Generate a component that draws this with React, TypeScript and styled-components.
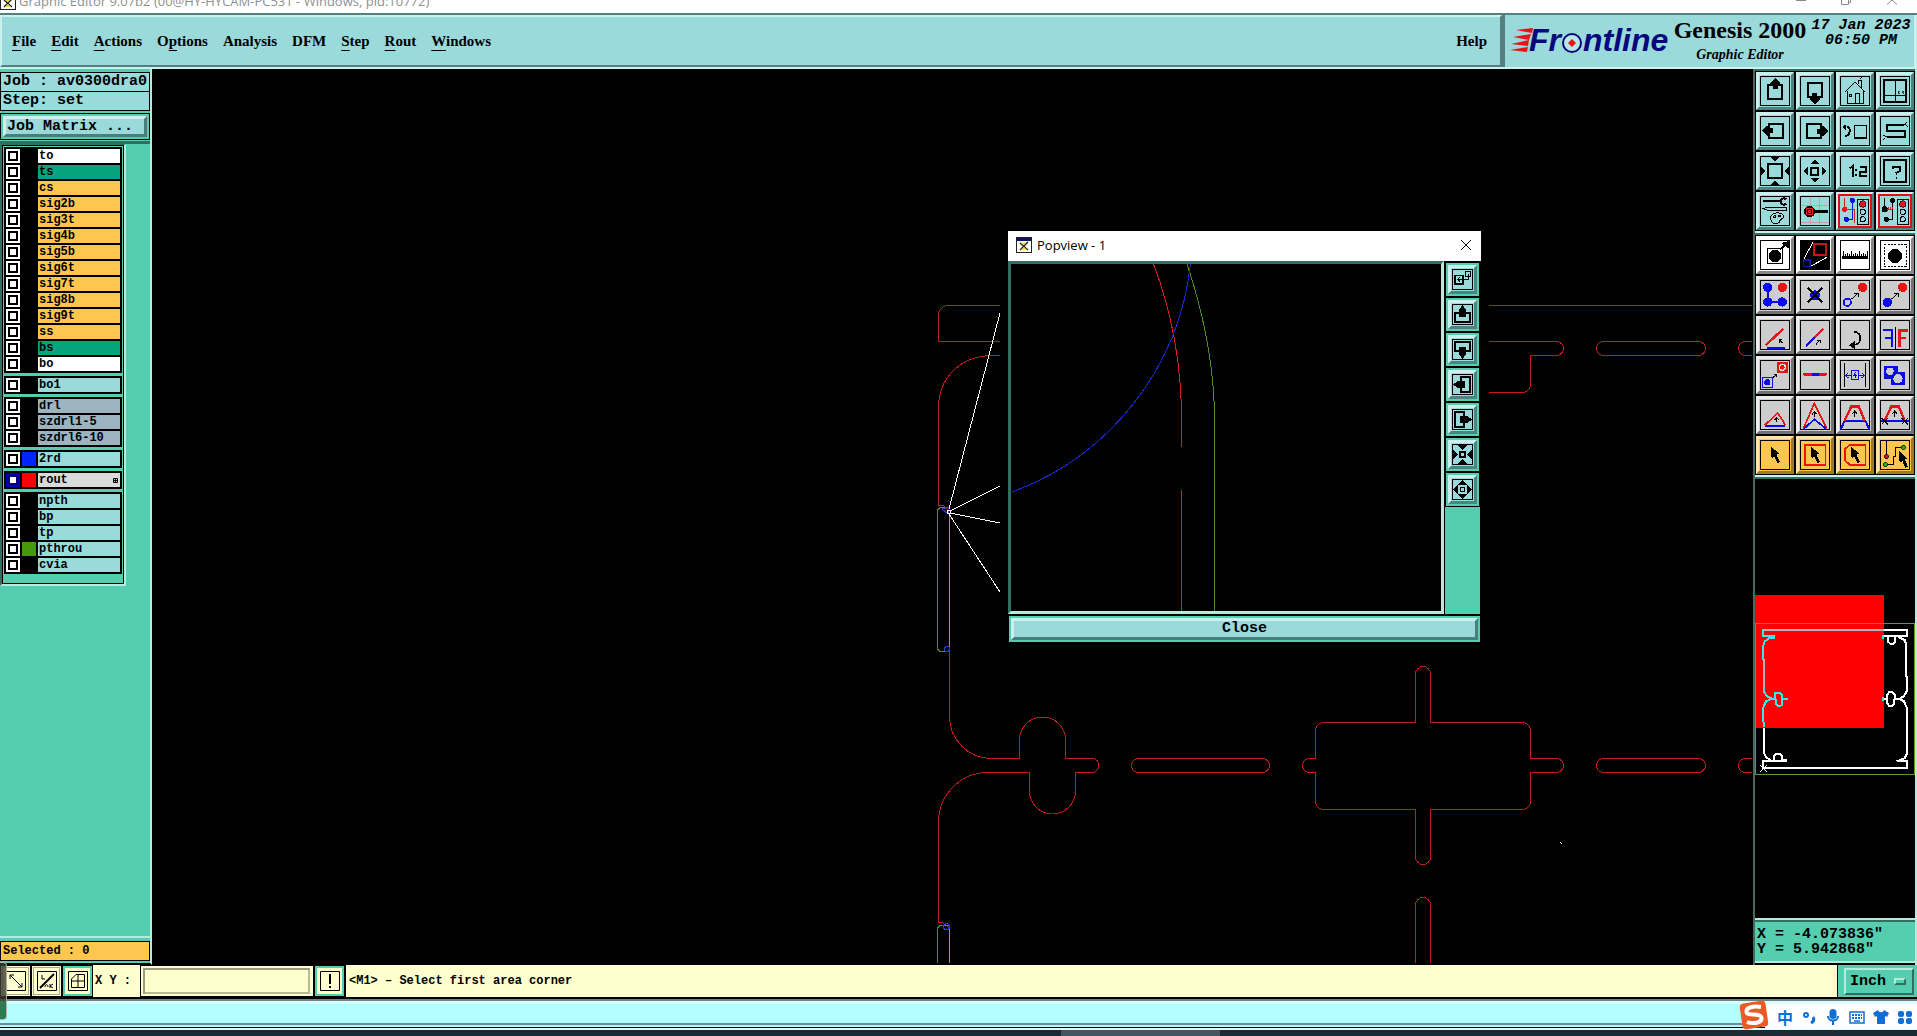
import React from "react";
import styled, { createGlobalStyle, css } from "styled-components";

const MONO = '"Liberation Mono", "Courier New", monospace';
const SERIF = '"Liberation Serif", "Times New Roman", serif';
const UI = '"Open Sans", "Noto Sans", sans-serif';

const c = {
  aqua: "#9adada",
  aquaLight: "#c9f2ee",
  aquaDark: "#56807f",
  green: "#55ceb0",
  greenLight: "#b5ebdc",
  greenDark: "#336f60",
  orange: "#fec64f",
  cream: "#ffffce",
  red: "#c41c1c",
};

const Global = createGlobalStyle`
  * { box-sizing: border-box; }
  html, body, #root { height: 100%; }
  body { margin: 0; background: #000; overflow: hidden; }
  button, input, select { margin: 0; padding: 0; border-radius: 0; }
`;

const Page = styled.div`
  position: relative;
  display: flex;
  flex-direction: column;
  height: 100vh;
  font-family: ${MONO};
  font-weight: bold;
  color: #000;
`;

/* ---------- window title ---------- */

const TitleBar = styled.header`
  display: flex;
  align-items: flex-end;
  justify-content: space-between;
  flex: none;
  height: 13px;
  overflow: hidden;
  background: #fff;
`;

const TitleText = styled.div`
  display: flex;
  align-items: flex-end;
  gap: 3px;
  font: 13px/18px ${UI};
  color: #8f8f8f;
  white-space: nowrap;
  padding-bottom: 3px;
`;

const WindowControls = styled.svg`
  width: 130px;
  height: 13px;
`;

/* ---------- menu + brand ---------- */

const bevel = css`
  border: 2px solid;
  border-color: ${c.aquaLight} ${c.aquaDark} ${c.aquaDark} ${c.aquaLight};
`;

const Header = styled.div`
  display: flex;
  flex: none;
  height: 56px;
  border-top: 2px solid ${c.aquaDark};
  border-bottom: 2px solid ${c.aquaLight};
  background: ${c.aqua};
`;

const MenuBar = styled.nav`
  ${bevel}
  display: flex;
  flex: 1;
  align-items: center;
  gap: 15px;
  padding: 0 13px 0 10px;
`;

const MenuItem = styled.button<{ $end?: boolean }>`
  border: 0;
  background: none;
  font: bold 15px/20px ${SERIF};
  margin-left: ${(p) => (p.$end ? "auto" : "0")};
  u {
    text-underline-offset: 4px;
    text-decoration-thickness: 1px;
    text-decoration-skip-ink: none;
  }
`;

const Brand = styled.div`
  display: flex;
  flex: none;
  width: 415px;
  padding-left: 4px;
  border-left: 3px solid ${c.aquaDark};
  border-right: 3px solid ${c.aquaLight};
`;

const Logo = styled.svg`
  flex: none;
  width: 163px;
  height: 52px;
`;

const Product = styled.div`
  flex: none;
  width: 136px;
  text-align: center;
  white-space: nowrap;
`;

const ProductName = styled.div`
  font: bold 24px/30px ${SERIF};
`;

const ProductPart = styled.div`
  font: italic bold 14px/20px ${SERIF};
`;

const Clock = styled.time`
  flex: 1;
  padding-top: 3px;
  font: italic bold 15px/15px ${MONO};
  text-align: center;
  white-space: nowrap;
`;

/* ---------- workspace ---------- */

const Workspace = styled.main`
  display: flex;
  flex: 1;
  min-height: 0;
`;

const LeftColumn = styled.aside`
  display: flex;
  flex-direction: column;
  flex: none;
  width: 152px;
  padding: 3px 0 2px;
  border-right: 2px solid ${c.greenLight};
  border-bottom: 2px solid #000;
  background: ${c.green};
`;

const InfoBox = styled.div<{ $tone?: string }>`
  flex: none;
  height: 20px;
  margin-bottom: -1px;
  padding: 0 2px;
  border: 1px solid #000;
  background: ${(p) => p.$tone || c.aqua};
  font-size: 15px;
  line-height: 18px;
  white-space: nowrap;
`;

const SelectedBox = styled(InfoBox)`
  margin: 0;
  font-size: 12px;
`;

const MatrixFrame = styled.div`
  flex: none;
  margin: 3px 0 1px;
  padding: 2px;
  border: 1px solid #000;
`;

const BevelButton = styled.button`
  display: block;
  width: 100%;
  height: 22px;
  border: 3px solid;
  border-color: ${c.aquaLight} #46807e #46807e ${c.aquaLight};
  background: ${c.aqua};
  font: bold 15px/16px ${MONO};
`;

const MatrixButton = styled(BevelButton)`
  height: 21px;
  line-height: 15px;
  text-align: left;
  padding-left: 1px;
`;

const LayerWell = styled.div`
  flex: 1;
  min-height: 0;
  border-top: 3px solid ${c.greenDark};
  border-bottom: 2px solid ${c.greenLight};
  margin-bottom: 3px;
`;

const LayerPanel = styled.section`
  width: 126px;
  border: 2px solid;
  border-top-width: 1px;
  border-color: ${c.greenDark} ${c.greenLight} ${c.greenLight} ${c.greenDark};
`;

const LayerList = styled.div`
  display: flex;
  flex-direction: column;
  gap: 3px;
  padding: 1px 1px 9px;
  border: 1px solid #000;
`;

const LayerGroup = styled.div`
  display: flex;
  flex-direction: column;
  gap: 2px;
  padding: 2px;
  background: #000;
`;

const LayerRow = styled.label`
  display: grid;
  grid-template-columns: 14px 14px 1fr;
  gap: 2px;
  height: 14px;
`;

const LayerCheck = styled.input<{ $active?: boolean }>`
  appearance: none;
  width: 14px;
  height: 14px;
  border: 2px solid ${(p) => (p.$active ? "#0000b4" : "#fff")};
  background: #fff;
  box-shadow: inset 0 0 0 2px ${(p) => (p.$active ? "#000070" : "#000")};
`;

const Swatch = styled.span<{ $color?: string }>`
  background: ${(p) => p.$color || "#000"};
`;

const LayerName = styled.span<{ $color: string }>`
  display: flex;
  justify-content: space-between;
  align-items: center;
  padding: 0 2px 0 1px;
  background: ${(p) => p.$color};
  font-size: 12px;
  line-height: 14px;
`;

const CanvasArea = styled.section`
  position: relative;
  flex: 1;
  min-width: 0;
  background: #000;
`;

const Drawing = styled.svg`
  display: block;
  width: 100%;
  height: 100%;
  shape-rendering: crispEdges;
`;

const RightColumn = styled.aside`
  display: flex;
  flex-direction: column;
  flex: none;
  width: 164px;
  padding-bottom: 2px;
  border-left: 2px solid #47695f;
  border-right: 2px solid ${c.greenLight};
  background: #000;
`;

const ToolGrid = styled.div`
  display: grid;
  grid-template-columns: repeat(4, 38px);
  gap: 2px;
  flex: none;
  padding: 1px;
  border-top: 2px solid ${c.greenDark};
  border-bottom: 2px solid ${c.aquaLight};
`;

const tones = {
  teal: ["#9adada", "#c9f2ee", "#4b8583"],
  white: ["#ffffff", "#ffffff", "#888888"],
  grey: ["#cdcdcd", "#eeeeee", "#727272"],
  orange: ["#fec64f", "#ffe6a8", "#a07828"],
} as const;

type Tone = keyof typeof tones;

const ToolButton = styled.button<{ $tone: Tone }>`
  display: block;
  width: 38px;
  height: 38px;
  padding: 1px;
  border: 3px solid;
  border-color: ${(p) => {
    const [, l, d] = tones[p.$tone];
    return `${l} ${d} ${d} ${l}`;
  }};
  background: ${(p) => tones[p.$tone][0]};
  svg {
    display: block;
    width: 30px;
    height: 30px;
    overflow: visible;
    shape-rendering: crispEdges;
  }
`;

const Overview = styled.div`
  flex: 1;
  min-height: 0;
  border-top: 2px solid ${c.greenDark};
  border-bottom: 2px solid ${c.greenLight};
`;

const Coordinates = styled.output`
  display: block;
  flex: none;
  height: 43px;
  padding: 5px 2px;
  border-top: 2px solid ${c.greenDark};
  border-bottom: 2px solid ${c.greenLight};
  background: ${c.green};
  font-size: 15px;
  line-height: 15px;
  white-space: pre;
`;

/* ---------- popview window ---------- */

const Popview = styled.section`
  position: absolute;
  left: 848px;
  top: 153px;
  width: 489px;
  height: 430px;
  padding: 9px 8px 8px;
  background: #000;
`;

const PopTitle = styled.div`
  display: flex;
  align-items: center;
  gap: 5px;
  height: 30px;
  padding: 0 9px 2px 8px;
  background: #fff;
  font: 13px/18px ${UI};
`;

const CloseGlyph = styled.button`
  display: block;
  margin-left: auto;
  width: 12px;
  height: 12px;
  border: 0;
  background: none;
  svg {
    display: block;
  }
`;

const PopBody = styled.div`
  display: flex;
  gap: 1px;
  height: 353px;
  padding-right: 1px;
`;

const PopCanvas = styled.div`
  flex: 1;
  border: 3px solid;
  border-color: ${c.greenDark} ${c.greenLight} ${c.greenLight} ${c.greenDark};
`;

const PopTools = styled.div`
  display: flex;
  flex-direction: column;
  flex: none;
  width: 35px;
  border-top: 1px solid #000;
  background: ${c.green};
`;

const PopToolCell = styled.div`
  flex: none;
  height: 35px;
  padding: 2px;
  border: 1px solid #000;
`;

const PopTool = styled.button`
  display: block;
  width: 29px;
  height: 29px;
  padding: 1px;
  border: 3px solid;
  border-color: ${c.aquaLight} #4b8583 #4b8583 ${c.aquaLight};
  background: ${c.aqua};
  svg {
    display: block;
    width: 21px;
    height: 21px;
    shape-rendering: crispEdges;
  }
`;

const PopFooter = styled.div`
  margin: 2px 1px 0;
  padding: 2px;
  background: ${c.green};
`;

/* ---------- bottom bars ---------- */

const CommandBar = styled.div`
  display: flex;
  flex: none;
  height: 34px;
  border-bottom: 2px solid #000;
  background: ${c.cream};
`;

const SnapButton = styled.button<{ $on?: boolean }>`
  flex: none;
  width: 31px;
  height: 32px;
  padding: 1px;
  border: ${(p) => (p.$on ? `3px solid ${c.green}` : `3px double #a8a890`)};
  outline: 1px solid #000;
  outline-offset: -1px;
  background: ${c.cream};
  svg {
    display: block;
    width: 20px;
    height: 20px;
    margin: 0 auto;
  }
`;

const PointLabel = styled.label`
  flex: none;
  width: 47px;
  padding-left: 2px;
  font-size: 12px;
  line-height: 33px;
  white-space: nowrap;
`;

const PointInput = styled.input`
  flex: none;
  width: 174px;
  height: 32px;
  border: 1px solid #000;
  padding: 0 6px;
  background: ${c.cream};
  box-shadow: inset 2px 2px 0 ${c.cream}, inset -3px -2px 0 ${c.cream},
    inset 4px 4px 0 #9a9a7c, inset -5px -4px 0 #b9b996;
  font: bold 12px ${MONO};
`;

const Message = styled.p`
  flex: 1;
  margin: 0;
  padding-left: 3px;
  border-left: 1px solid #000;
  font-size: 12px;
  line-height: 33px;
`;

const UnitBox = styled.div`
  position: relative;
  flex: none;
  width: 80px;
  padding: 3px 4px 2px 6px;
  border-left: 1px solid #000;
  background: ${c.green};
`;

const UnitSelect = styled.select`
  appearance: none;
  width: 70px;
  height: 27px;
  padding-left: 4px;
  border: 2px solid;
  border-color: ${c.greenLight} ${c.greenDark} ${c.greenDark} ${c.greenLight};
  background: ${c.green};
  color: #000;
  font: bold 15px ${MONO};
`;

const UnitMark = styled.span`
  position: absolute;
  right: 11px;
  top: 13px;
  width: 12px;
  height: 7px;
  border: 2px solid;
  border-color: ${c.greenLight} ${c.greenDark} ${c.greenDark} ${c.greenLight};
  pointer-events: none;
`;

const StatusStrip = styled.div`
  flex: none;
  height: 31px;
  border-top: 2px solid #6f8585;
  border-bottom: 2px solid #d8ffff;
  background: linear-gradient(#d9ffff 0 3px, #b3ffff 3px 22px, #5f9494 22px 24px, #b3ffff 24px 26px, #000 26px);
`;

const Taskbar = styled.footer`
  flex: none;
  height: 6px;
  background: linear-gradient(#45575c, #45575c) 1061px 0 / 159px 6px no-repeat, #1c2b33;
`;

const SideHandle = styled.div`
  position: absolute;
  left: 0;
  bottom: 16px;
  width: 7px;
  height: 58px;
  border: 1px solid rgba(200, 200, 190, 0.8);
  border-left: 0;
  border-radius: 0 4px 4px 0;
  background: linear-gradient(rgba(60, 60, 50, 0.8) 0 38px, #2f7a50 38px);
`;

const ImeBar = styled.div`
  position: absolute;
  right: 0;
  bottom: 7px;
  display: flex;
  align-items: center;
  gap: 8px;
  height: 25px;
  padding: 0 4px 0 12px;
  background: #fff;
  color: #0f6fd6;
  font: bold 16px/20px "Noto Sans CJK SC", sans-serif;
  svg {
    display: block;
  }
`;

const ImeLogo = styled.svg`
  position: absolute;
  left: -27px;
  top: -5px;
`;

/* ---------- icons ---------- */

const Glyph = ({ children, red }: { children: React.ReactNode; red?: boolean }) => (
  <svg viewBox="0 0 90 90" fill="none" stroke="#000" strokeWidth={3}>
    {red ? (
      <rect x={-3} y={-3} width={96} height={96} stroke="#e01010" strokeWidth={6} />
    ) : (
      <rect x={1.5} y={1.5} width={87} height={87} />
    )}
    {children}
  </svg>
);

const PanIcon = ({ turn }: { turn: number }) => (
  <Glyph>
    <g transform={`rotate(${turn} 45 45)`}>
      <rect x={24} y={28} width={43} height={41} strokeWidth={6} />
      <path d="M45 6 L61 21 V25 H53 V40 H38 V25 H30 V21 Z" fill="#000" stroke="none" />
    </g>
  </Glyph>
);

const Arrows = ({ tip, base, half, mid }: { tip: number; base: number; half: number; mid: number }) => (
  <g fill="#000" stroke="none">
    {[0, 90, 180, 270].map((a) => (
      <path key={a} transform={`rotate(${a} ${mid} ${mid})`} d={`M${mid} ${tip} L${mid + half} ${base} H${mid - half} Z`} />
    ))}
  </g>
);

const Cursor = ({ x = 0, y = 0 }: { x?: number; y?: number }) => (
  <path
    transform={`translate(${x} ${y})`}
    d="M32 18 L58 42 L50 44 L60 66 L52 70 L43 49 L35 55 Z"
    fill="#000"
    stroke="none"
  />
);

const Lights = () => (
  <>
    <rect x={52} y={9} width={34} height={76} />
    <circle cx={68} cy={24} r={10} fill="#e01818" strokeWidth={2} />
    <circle cx={68} cy={48} r={8} />
    <circle cx={68} cy={70} r={8} />
  </>
);

const NavIcons: [string, React.ReactNode][] = [
  ["Pan up", <PanIcon turn={0} />],
  ["Pan down", <PanIcon turn={180} />],
  ["Home", <Glyph>
    <path d="M16 48 L45 18 L74 48 M21 45 V81 H69 V45 M54 24 V12 H63 V36 M59 10 L66 3" />
    <path d="M45 81 V53 H58 V81" /><rect x={28} y={55} width={7} height={7} />
  </Glyph>],
  ["Window XY", <Glyph>
    <rect x={12} y={12} width={66} height={65} strokeWidth={5} /><path d="M46 12 V77 M12 58 H78" />
    <path d="M53 45 L60 54 M60 45 L53 54 M65 45 L69 50 L73 45 M69 50 V54" strokeWidth={2} />
  </Glyph>],
  ["Pan left", <PanIcon turn={-90} />],
  ["Pan right", <PanIcon turn={90} />],
  ["Previous view", <Glyph>
    <rect x={43} y={28} width={36} height={37} strokeWidth={5} />
    <path d="M20 32 C34 32 32 60 15 60" strokeWidth={6} /><path d="M6 33 L19 24 V43 Z" fill="#000" stroke="none" />
  </Glyph>],
  ["Serpentine", <Glyph>
    <path d="M72 26 H21 V45 H75 V63 H20" strokeWidth={5} /><path d="M72 26 L82 17 M76 24 L82 32 M20 63 L9 57 M14 66 L9 73" />
  </Glyph>],
  ["Zoom in", <Glyph><rect x={24} y={24} width={43} height={43} strokeWidth={6} /><Arrows tip={17} base={3} half={14} mid={45} /></Glyph>],
  ["Zoom out", <Glyph><rect x={34} y={35} width={21} height={21} strokeWidth={6} /><Arrows tip={11} base={25} half={15} mid={45} /></Glyph>],
  ["Scale 1:2", <Glyph>
    <path d="M30 37 L38 31 V63 M48 39 V44 M48 54 V59 M59 33 H79 V47 H60 V60 H80" strokeWidth={6} />
  </Glyph>],
  ["Query", <Glyph>
    <rect x={12} y={12} width={66} height={66} strokeWidth={5} /><path d="M38 40 V32 H60 V45 L49 51 V58 M49 63 V68" strokeWidth={5} />
  </Glyph>],
  ["Options", <Glyph>
    <path d="M9 16 H60" strokeWidth={6} /><path d="M78 10 A9 9 0 1 0 78 23" strokeWidth={6} />
    <path d="M10 38 L20 34 H78 V42 H20 Z" />
    <path d="M35 76 C25 62 38 50 52 51 C72 50 76 64 66 68 C54 72 64 80 52 82 C43 83 37 82 35 76 Z" />
    <circle cx={44} cy={62} r={3} /><circle cx={58} cy={60} r={3} />
  </Glyph>],
  ["Grid origin", <Glyph>
    <path d="M30 3 V87 M58 3 V87 M3 27 H87 M3 78 H87" stroke="#c9a3a3" />
    <circle cx={29} cy={47} r={17} fill="#000" stroke="none" /><path d="M44 47 H84" strokeWidth={9} />
    <rect x={20} y={38} width={18} height={18} stroke="#d02020" /><rect x={26} y={44} width={5} height={5} stroke="#d02020" />
  </Glyph>],
  ["Net analyzer", <Glyph red>
    <path d="M14 6 V40 M14 40 H43 V82" stroke="#d02020" /><circle cx={14} cy={40} r={8} fill="#e01818" stroke="none" />
    <path d="M37 13 V70 H19" stroke="#1010e0" strokeWidth={4} /><circle cx={37} cy={13} r={8} fill="#1010e0" stroke="none" /><circle cx={19} cy={70} r={8} fill="#1010e0" stroke="none" />
    <Lights />
  </Glyph>],
  ["Measure analyzer", <Glyph red>
    <path d="M14 6 V40 M37 13 V70 H19" /><circle cx={14} cy={40} r={8} fill="#000" /><circle cx={37} cy={13} r={6} fill="#000" /><circle cx={19} cy={70} r={6} fill="#000" />
    <path d="M22 40 H37 M24 33 V40 M30 33 V40 M36 33 V40" stroke="#d02020" />
    <Lights />
  </Glyph>],
];

const R = "#e81414";
const B = "#0a0af0";

const EditIcons: [string, Tone, React.ReactNode][] = [
  ["Add feature", "white", <Glyph>
    <rect x={22} y={26} width={46} height={44} /><circle cx={45} cy={48} r={17} fill="#000" /><path d="M60 28 L76 16" strokeWidth={6} /><path d="M84 5 V22 L67 10 Z" fill="#000" />
  </Glyph>],
  ["Zoom selection", "white", <Glyph>
    <rect x={0} y={0} width={90} height={90} fill="#000" stroke="none" />
    <rect x={42} y={11} width={35} height={35} stroke="#c01818" strokeWidth={5} /><rect x={11} y={60} width={19} height={19} stroke="#1414d0" strokeWidth={5} />
    <path d="M12 56 L39 7 M34 78 L80 52" stroke="#fff" />
  </Glyph>],
  ["Ruler", "white", <Glyph>
    <path d="M8 56 H82 V50 H8 Z" fill="#000" /><path d="M9 34 V55 M15 43 V55 M21 38 V55 M27 43 V55 M33 34 V55 M39 43 V55 M45 38 V55 M51 43 V55 M57 34 V55 M63 43 V55 M69 38 V55 M75 43 V55 M81 34 V55" />
  </Glyph>],
  ["Select feature", "white", <Glyph>
    <rect x={13} y={14} width={65} height={66} strokeDasharray="6 4" /><circle cx={45} cy={48} r={20} fill="#000" />
  </Glyph>],
  ["Net polygon", "grey", <Glyph>
    <path d="M23 22 V66 H67" stroke={B} strokeWidth={7} /><g stroke="none" fill={B}><circle cx={23} cy={22} r={14} /><circle cx={23} cy={66} r={14} /><circle cx={67} cy={66} r={14} /></g><circle cx={67} cy={22} r={14} fill={R} stroke="none" />
  </Glyph>],
  ["Delete", "grey", <Glyph><circle cx={45} cy={46} r={15} fill={B} stroke="none" /><path d="M23 24 L67 68 M67 24 L23 68" strokeWidth={6} /></Glyph>],
  ["Copy feature", "grey", <Glyph>
    <circle cx={22} cy={67} r={11} stroke={B} strokeWidth={5} /><circle cx={68} cy={22} r={14} fill={R} stroke="none" /><path d="M35 57 L53 41 M42 40 H54 V52" />
  </Glyph>],
  ["Move feature", "grey", <Glyph>
    <circle cx={22} cy={67} r={14} fill={B} stroke="none" /><circle cx={68} cy={22} r={14} fill={R} stroke="none" /><path d="M35 57 L53 41 M42 40 H54 V52" />
  </Glyph>],
  ["Rotate line", "grey", <Glyph>
    <path d="M17 76 L70 26" stroke={R} strokeWidth={7} /><path d="M20 83 H76" stroke={B} strokeWidth={7} /><path d="M68 70 L57 59 M57 68 V59 H67" />
  </Glyph>],
  ["Extend line", "grey", <Glyph>
    <path d="M18 78 L45 52" stroke={B} strokeWidth={7} /><path d="M45 52 L69 26" stroke={R} strokeWidth={7} /><path d="M48 73 L60 60 M50 60 H60 V70" />
  </Glyph>],
  ["Rotate", "grey", <Glyph><path d="M42 35 C68 35 68 76 38 75" strokeWidth={5} /><path d="M29 76 L42 66 V84 Z" fill="#000" /></Glyph>],
  ["Mirror", "grey", <Glyph>
    <path d="M8 31 H35 V82 M35 54 H14" stroke={B} strokeWidth={6} /><path d="M46 22 V86" /><path d="M84 31 H58 V82 M58 54 H78" stroke={R} strokeWidth={7} />
  </Glyph>],
  ["Scale", "grey", <Glyph>
    <rect x={7} y={52} width={30} height={30} stroke={B} /><circle cx={22} cy={67} r={9} fill={B} stroke="none" /><rect x={54} y={8} width={27} height={27} fill={R} stroke={R} strokeWidth={6} /><circle cx={67} cy={22} r={9} fill={R} stroke="#ddd" strokeWidth={4} /><path d="M40 52 L50 43 M42 43 H50 V51" />
  </Glyph>],
  ["Join", "grey", <Glyph><path d="M13 43 H77" stroke={R} strokeWidth={8} strokeLinecap="round" /><path d="M36 43 H56" stroke={B} strokeWidth={8} /></Glyph>],
  ["Spacing", "grey", <Glyph>
    <path d="M13 10 V80 M77 10 V80" /><g stroke={B}><rect x={34} y={32} width={22} height={26} /><path d="M34 46 H17 M25 38 L16 46 L25 54 M56 46 H73 M65 38 L74 46 L65 54 M47 37 L41 46 H50 M47 41 V53" /></g>
  </Glyph>],
  ["Substitute", "grey", <Glyph>
    <path d="M12 18 H54 V37 H76 V76 H34 V57 H12 Z" fill={B} stroke="none" /><circle cx={30} cy={34} r={11} fill="#ccc" stroke="none" /><circle cx={54} cy={56} r={14} fill="#ccc" stroke="none" />
  </Glyph>],
  ["Chamfer", "grey", <Glyph><path d="M15 78 H76" stroke={B} strokeWidth={7} /><path d="M14 76 L53 39 L77 76" stroke={R} strokeWidth={5} /><path d="M50 66 V54 M43 60 L50 53 L57 60" /></Glyph>],
  ["Peak", "grey", <Glyph><path d="M10 86 L43 10 L80 86" stroke={R} strokeWidth={5} /><path d="M12 86 L43 58 L78 86" stroke={B} strokeWidth={5} /><path d="M43 50 V36 M36 43 L43 35 L50 43" /></Glyph>],
  ["Trapezoid", "grey", <Glyph><path d="M2 88 L14 62 H76 L88 88" stroke={B} strokeWidth={6} /><path d="M14 62 L34 19 H56 L74 62" stroke={R} strokeWidth={7} /><path d="M44 52 V34 M37 41 L44 33 L51 41" /></Glyph>],
  ["Trim trapezoid", "grey", <Glyph><path d="M2 62 H88" stroke={B} strokeWidth={7} /><path d="M14 62 L34 19 H56 L74 62" stroke={R} strokeWidth={7} /><path d="M44 52 V34 M37 41 L44 33 L51 41 M5 54 L24 73 M24 54 L5 73 M65 54 L84 73 M84 54 L65 73" /></Glyph>],
  ["Select", "orange", <Glyph><Cursor /></Glyph>],
  ["Select in frame", "orange", <Glyph><rect x={14} y={14} width={62} height={61} stroke={R} strokeWidth={5} /><Cursor /></Glyph>],
  ["Select in polygon", "orange", <Glyph><path d="M30 14 H76 V75 H30 L14 60 V28 Z" stroke={R} strokeWidth={5} /><Cursor /></Glyph>],
  ["Select net", "orange", <Glyph>
    <path d="M19 3 V48 M16 74 H39 V48 H47 V22 H68" /><circle cx={19} cy={50} r={7} fill="#c01818" strokeWidth={2} /><circle cx={16} cy={74} r={7} fill="#20b020" strokeWidth={2} /><circle cx={70} cy={22} r={7} fill="#20b020" strokeWidth={2} /><Cursor x={24} y={14} />
  </Glyph>],
];

const SmallGlyph = ({ children }: { children: React.ReactNode }) => (
  <svg viewBox="0 0 63 63" fill="none" stroke="#000" strokeWidth={3}>
    <rect x={1.5} y={1.5} width={60} height={60} />
    {children}
  </svg>
);

const SmallPan = ({ turn }: { turn: number }) => (
  <SmallGlyph>
    <g transform={`rotate(${turn} 31.5 31.5)`}>
      <path d="M22 28 H9 V53 H54 V28 H41" strokeWidth={6} />
      <path d="M31.5 4 L45 19 H41 V39 H22 V19 H18 Z" fill="#000" stroke="none" />
    </g>
  </SmallGlyph>
);

const PopIcons: [string, React.ReactNode][] = [
  ["Zoom area", <SmallGlyph>
    <rect x={9} y={19} width={24} height={26} strokeWidth={5} /><rect x={39} y={7} width={15} height={15} /><path d="M48 14 V31 H17 M24 25 L17 31 L24 37" strokeWidth={3} />
  </SmallGlyph>],
  ["Popview pan up", <SmallPan turn={0} />],
  ["Popview pan down", <SmallPan turn={180} />],
  ["Popview pan left", <SmallPan turn={-90} />],
  ["Popview pan right", <SmallPan turn={90} />],
  ["Popview zoom in", <SmallGlyph><rect x={24} y={24} width={15} height={15} strokeWidth={5} /><Arrows tip={18} base={4} half={13} mid={31.5} /></SmallGlyph>],
  ["Popview zoom out", <SmallGlyph><rect x={26} y={26} width={11} height={11} /><Arrows tip={4} base={17} half={13} mid={31.5} /></SmallGlyph>],
];

const AppIcon = () => (
  <svg width={16} height={16} viewBox="0 0 16 16">
    <rect x={0.5} y={0.5} width={15} height={15} fill="#fff" stroke="#222" />
    <rect x={1} y={1} width={14} height={3} fill="#10106a" />
    <path d="M4 6 L12 13 M12 5 L4 13" stroke="#222" strokeWidth={1.4} />
    <path d="M5 6 L10 5 L8 8 Z M5 13 L8 10 L11 13 Z" fill="#e8e020" />
  </svg>
);

const FrontlineLogo = () => (
  <Logo role="img" aria-label="Frontline">
    <g fill="#e51515">
      <path d="M7 15 L24 13 L23 18 Z M4 22 L22 19 L20 25 Z M2 29 L20 25 L19 31 Z M1 35 L19 32 L18 37 Z" />
    </g>
    <g fill="#08087c" fontFamily='"Liberation Sans", Arial, sans-serif' fontWeight="bold" fontStyle="italic" fontSize={32}>
      <text x={20} y={36}>Fr</text>
      <text x={74} y={36}>ntline</text>
    </g>
    <circle cx={63} cy={28} r={9} fill="#b9e6e6" stroke="#08087c" strokeWidth={2} />
    <path d="M63 24 L67 28 L63 32 L59 28 Z" fill="#e51515" />
  </Logo>
);

/* ---------- data ---------- */

type Layer = { name: string; tone: string; swatch?: string; active?: boolean };
const many = (names: string[], tone: string): Layer[] => names.map((name) => ({ name, tone }));
const mask = "#04a57c";
const drill = "#9bb4bf";

const layerGroups: Layer[][] = [
  [
    ...many(["to"], "#fff"),
    ...many(["ts"], mask),
    ...many(["cs", "sig2b", "sig3t", "sig4b", "sig5b", "sig6t", "sig7t", "sig8b", "sig9t", "ss"], c.orange),
    ...many(["bs"], mask),
    ...many(["bo"], "#fff"),
  ],
  many(["bo1"], c.aqua),
  many(["drl", "szdrl1-5", "szdrl6-10"], drill),
  [{ name: "2rd", tone: c.aqua, swatch: "#0024ff" }],
  [{ name: "rout", tone: "#dadada", swatch: "#ff0000", active: true }],
  [
    ...many(["npth", "bp", "tp"], c.aqua),
    { name: "pthrou", tone: c.aqua, swatch: "#449a06" },
    ...many(["cvia"], c.aqua),
  ],
];

const menus: [string, string, string][] = [
  ["", "F", "ile"],
  ["", "E", "dit"],
  ["", "A", "ctions"],
  ["O", "p", "tions"],
  ["Analysis", "", ""],
  ["DFM", "", ""],
  ["", "S", "tep"],
  ["", "R", "out"],
  ["", "W", "indows"],
];

/* ---------- drawings ---------- */

const BoardDrawing = () => (
  <Drawing aria-label="Rout layer">
    <g transform="translate(-152 -69)" fill="none" stroke={c.red}>
      <path d="M1000 305.500 H948 A9.500 9.500 0 0 0 938.500 315 V341.500 H1000" />
      <path d="M1000 355.500 H992 C960 356 938.500 378 938.500 408 V505.500 L944 506 L949.500 511" />
      <path d="M949.500 651 V717 A42 42 0 0 0 991.500 758.500 H1019.500 V740 A23 23 0 0 1 1065.500 740 V758.500 H1092 A7 7 0 0 1 1092 772.500 H1075.500 V791 A23 23 0 0 1 1029.500 791 V772.500 H988 A49.500 49.500 0 0 0 938.500 822 V922.500 L943 923 L949.500 928" />
      <rect x={1131.5} y={758.5} width={138} height={14} rx={7} />
      <path d="M1315.500 758.500 H1309.500 A7 7 0 0 0 1309.500 772.500 H1315.500 V801 A8 8 0 0 0 1323.500 809.500 H1415.500 V857 A7.500 7.500 0 0 0 1430.500 857 V809.500 H1522.500 A8 8 0 0 0 1530.500 801 V772.500 H1556.500 A7 7 0 0 0 1556.500 758.500 H1530.500 V730 A8 8 0 0 0 1522.500 722.500 H1430.500 V674 A7.500 7.500 0 0 0 1415.500 674 V722.500 H1323.500 A8 8 0 0 0 1315.500 730 Z" />
      <path d="M1415.500 963 V905 A7.500 7.500 0 0 1 1430.500 905 V963" />
      <rect x={1596.5} y={758.5} width={109} height={14} rx={7} />
      <path d="M1752 758.500 H1745.500 A7 7 0 0 0 1745.500 772.500 H1752" />
      <path d="M1488 305.500 H1752 M1488 341.500 H1556.500 A7 7 0 0 1 1556.500 355.500 H1530.500 V384 A8 8 0 0 1 1522.500 392.500 H1488" />
      <rect x={1596.5} y={341.5} width={109} height={14} rx={7} />
      <path d="M1752 341.500 H1745.500 A7 7 0 0 0 1745.500 355.500 H1752" />
      <path d="M949 507.500 H940 L937.500 510 V649 L940 651.500 H946 M949 925.500 H940 L937.500 928 V963" stroke="#4e8a36" />
      <path d="M949.500 513 V650 M949.500 929 V963" stroke="#b39036" />
      <path d="M942 509 L949 507 L948 514 L942 509" stroke="#2340d0" />
      <circle cx={947} cy={649} r={2.5} stroke="#2340d0" />
      <circle cx={946.5} cy={926.5} r={3} stroke="#2340d0" />
      <path d="M949 509 L1000 313 M950 511 L1000 486 M950 513 L1000 523 M949 514 L1000 592" stroke="#fff" />
      <rect x={947.5} y={510.5} width={3} height={3} stroke="#fff" />
      <path d="M1560 842.500 H1561 M1561 843.500 H1562" stroke="#fff" />
    </g>
  </Drawing>
);

const PopDrawing = () => (
  <Drawing aria-label="Magnified view">
    <g transform="translate(-1011 -264)" fill="none">
      <path d="M1153.500 264 C1171 310 1181.500 365 1181.500 420 V447 M1181.500 490 V611" stroke="#d42020" />
      <path d="M1187 264 C1204 315 1214.500 370 1214.500 420 V611" stroke="#4e8a26" />
      <path d="M1190.500 264 A275 275 0 0 1 1012 492" stroke="#1a2ad0" />
    </g>
  </Drawing>
);

const OverviewDrawing = () => (
  <Drawing aria-label="Board overview">
    <g transform="translate(-5 101) scale(0.33333)" fill="none" strokeWidth={6}>
      <rect x={15} y={45} width={387} height={399} fill="#ff0000" />
      <path d="M16 130 H495 V583 H16 Z" stroke="#5f9a2c" strokeWidth={3} />
      <g stroke="#fff">
        <path d="M402 150 H471 V168 H402 M415 168 V186 L422 192 H430 L436 184 V172 M445 171 L464 180 L469 195 V288 L472 292 V330 L462 348 L448 357 L462 364 L470 382 V475 M470 475 L472 480 V518 L464 535 L440 544 H470 V564 H40 V544 H111" />
        <path d="M41 443 V515 L48 532 L62 541 M73 542 V528 L79 521 H90 L97 528 V540 H111" />
        <path d="M402 357 H414 M448 357 H434 M412 345 L418 335 H427 L434 345 V352 L432 372 L426 379 H418 L411 368 Z" />
      </g>
      <path d="M402 150 H43 M42 238 V325" stroke="#b5b5b5" />
      <g stroke="#35e8ea">
        <path d="M43 150 H39 V167 H71 V173 H60 L44 184 L39 200 V238 L42 242" />
        <path d="M42 325 V335 L50 348 L66 356 L48 364 L40 382 V425 L43 430 V442 M66 356 H78 M100 356 H113 M76 338 H88 L96 345 V374 L90 379 H84 L77 370 Z" />
        <path d="M395 170 H403 M395 357 H403" strokeWidth={12} />
      </g>
      <path d="M30 555 L50 575 M50 555 L30 575" stroke="#fff" strokeWidth={3} />
    </g>
  </Drawing>
);

/* ---------- app ---------- */

export default function App() {
  return (
    <Page>
      <Global />
      <TitleBar>
        <TitleText>
          <AppIcon />
          Graphic Editor 9.07b2 (00@HY-HYCAM-PC531 - Windows, pid:10772)
        </TitleText>
        <WindowControls viewBox="0 0 130 13" fill="none" stroke="#888">
          <path d="M9 0.500 H19 M54.500 0 V4.500 H61.500 V0 M61.500 2.500 H63.500 V0 M100 4.500 L105 0 L110 4.500" />
        </WindowControls>
      </TitleBar>

      <Header>
        <MenuBar>
          {menus.map(([a, u, b]) => (
            <MenuItem key={a + u + b}>
              {a}
              {u && <u>{u}</u>}
              {b}
            </MenuItem>
          ))}
          <MenuItem $end>Help</MenuItem>
        </MenuBar>
        <Brand>
          <FrontlineLogo />
          <Product>
            <ProductName>Genesis 2000</ProductName>
            <ProductPart>Graphic Editor</ProductPart>
          </Product>
          <Clock>
            17 Jan 2023
            <br />
            06:50 PM
          </Clock>
        </Brand>
      </Header>

      <Workspace>
        <LeftColumn>
          <InfoBox>Job : av0300dra0</InfoBox>
          <InfoBox>Step: set</InfoBox>
          <MatrixFrame>
            <MatrixButton>Job Matrix ...</MatrixButton>
          </MatrixFrame>
          <LayerWell>
            <LayerPanel>
              <LayerList>
                {layerGroups.map((group, i) => (
                  <LayerGroup key={i}>
                    {group.map((l) => (
                      <LayerRow key={l.name}>
                        <LayerCheck type="checkbox" $active={l.active} defaultChecked={l.active} />
                        <Swatch $color={l.swatch} />
                        <LayerName $color={l.tone}>
                          {l.name}
                          {l.active && (
                            <svg width={5} height={5} viewBox="0 0 5 5" stroke="#000" fill="none">
                              <path d="M0.500 0.500 H4.500 V4.500 H0.500 Z M2.500 0 V5 M0 2.500 H5" />
                            </svg>
                          )}
                        </LayerName>
                      </LayerRow>
                    ))}
                  </LayerGroup>
                ))}
              </LayerList>
            </LayerPanel>
          </LayerWell>
          <SelectedBox $tone={c.orange}>Selected : 0</SelectedBox>
        </LeftColumn>

        <CanvasArea>
          <BoardDrawing />
          <Popview aria-label="Popview">
            <PopTitle>
              <AppIcon />
              Popview - 1
              <CloseGlyph aria-label="Close window">
                <svg width={12} height={12} stroke="#111" fill="none">
                  <path d="M1 1 L11 11 M11 1 L1 11" />
                </svg>
              </CloseGlyph>
            </PopTitle>
            <PopBody>
              <PopCanvas>
                <PopDrawing />
              </PopCanvas>
              <PopTools>
                {PopIcons.map(([label, icon]) => (
                  <PopToolCell key={label}>
                    <PopTool aria-label={label}>{icon}</PopTool>
                  </PopToolCell>
                ))}
              </PopTools>
            </PopBody>
            <PopFooter>
              <BevelButton>Close</BevelButton>
            </PopFooter>
          </Popview>
        </CanvasArea>

        <RightColumn>
          <ToolGrid>
            {NavIcons.map(([label, icon]) => (
              <ToolButton key={label} $tone="teal" aria-label={label}>
                {icon}
              </ToolButton>
            ))}
          </ToolGrid>
          <ToolGrid>
            {EditIcons.map(([label, tone, icon]) => (
              <ToolButton key={label} $tone={tone} aria-label={label}>
                {icon}
              </ToolButton>
            ))}
          </ToolGrid>
          <Overview>
            <OverviewDrawing />
          </Overview>
          <Coordinates>{'X = -4.073836"\nY = 5.942868"'}</Coordinates>
        </RightColumn>
      </Workspace>

      <CommandBar>
        <SnapButton aria-label="Snap to line">
          <svg viewBox="0 0 20 20" fill="none" stroke="#000">
            <path d="M0.500 0.500 H19.500 V19.500 H0.500 Z M4 4 L16 16 M4 8 V4 H8 M16 12 V16 H12" />
          </svg>
        </SnapButton>
        <SnapButton aria-label="Snap to angle">
          <svg viewBox="0 0 20 20" fill="none" stroke="#000">
            <path d="M0.500 0.500 H19.500 V19.500 H0.500 Z M5 4 V8 H8 M8 16 C8 13 11 13 11 16 M13 13 V17 M16 13 L13 15 L16 17" />
            <path d="M3 17 L17 3" strokeWidth={2} />
          </svg>
        </SnapButton>
        <SnapButton $on aria-label="Snap to grid">
          <svg viewBox="0 0 20 20" fill="none" stroke="#000">
            <path d="M0.500 0.500 H19.500 V19.500 H0.500 Z M3.500 8 L8 3.500 H16.500 V16.500 H3.500 Z M10 3 V17 M3 10 H17" />
          </svg>
        </SnapButton>
        <PointLabel htmlFor="point">X Y :</PointLabel>
        <PointInput id="point" />
        <SnapButton $on aria-label="Apply">
          <svg viewBox="0 0 20 20" fill="none" stroke="#000">
            <path d="M0.500 0.500 H19.500 V19.500 H0.500 Z" />
            <path d="M10 3 V13 M10 15 V17" strokeWidth={2} />
          </svg>
        </SnapButton>
        <Message>&lt;M1&gt; – Select first area corner</Message>
        <UnitBox>
          <UnitSelect aria-label="Units" defaultValue="Inch">
            <option>Inch</option>
          </UnitSelect>
          <UnitMark />
        </UnitBox>
      </CommandBar>
      <StatusStrip />
      <Taskbar />
      <SideHandle />

      <ImeBar>
        <ImeLogo width={32} height={32} viewBox="0 0 32 32">
          <g transform="rotate(-8 16 16)">
            <rect x={3} y={3} width={26} height={26} rx={4} fill="#ee5a24" />
            <path d="M24 9 C17 7 9 7 9 12 C9 17 23 14 23 20 C23 25 14 25 8 22" fill="none" stroke="#fff" strokeWidth={4} />
          </g>
        </ImeLogo>
        <span>中</span>
        <svg width={16} height={16} fill="none" stroke="#0f6fd6" strokeWidth={2}>
          <circle cx={5} cy={6} r={2} />
          <path d="M12 8 C14 11 12 13 10 14" strokeWidth={3} />
        </svg>
        <svg width={16} height={16} fill="none" stroke="#0f6fd6" strokeWidth={2}>
          <rect x={5.5} y={1} width={5} height={8} rx={2.5} fill="#0f6fd6" />
          <path d="M3 7 C3 13 13 13 13 7 M8 12 V16" />
        </svg>
        <svg width={16} height={16} fill="none" stroke="#0f6fd6" strokeWidth={1.5}>
          <rect x={1} y={3} width={14} height={11} />
          <path d="M3 6 H13 M3 9 H13" strokeDasharray="2 1" strokeWidth={2} />
          <path d="M5 12 H11" />
        </svg>
        <svg width={16} height={16} fill="#0f6fd6">
          <path d="M0 4 L5 1 C6 4 10 4 11 1 L16 4 L14 8 L12 7 V15 H4 V7 L2 8 Z" />
        </svg>
        <svg width={16} height={16} fill="#0f6fd6">
          <rect x={1} y={2} width={6} height={6} rx={2} />
          <rect x={9} y={2} width={6} height={6} rx={2} />
          <rect x={1} y={9} width={6} height={6} rx={2} />
          <rect x={9} y={9} width={6} height={6} rx={2} />
        </svg>
      </ImeBar>
    </Page>
  );
}
